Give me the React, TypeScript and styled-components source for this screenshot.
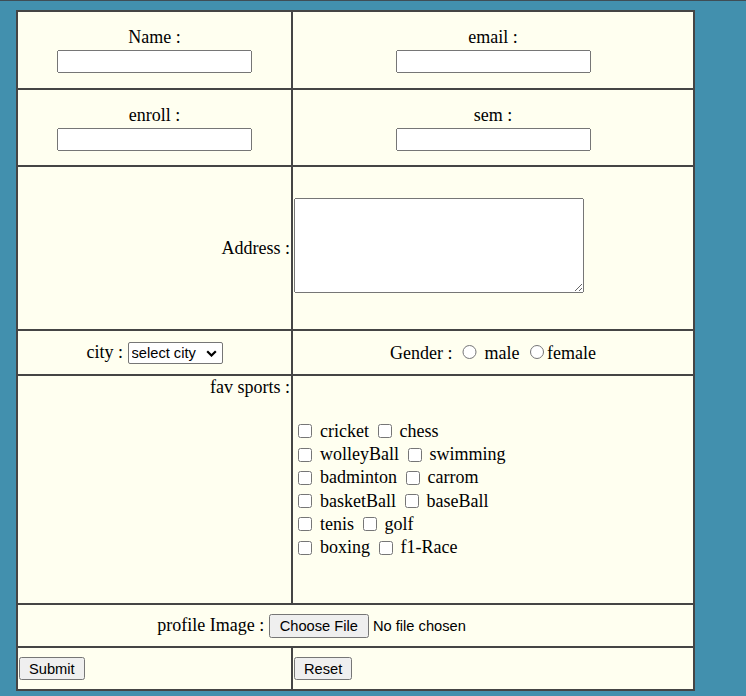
import styled, { createGlobalStyle } from 'styled-components';

const GlobalStyle = createGlobalStyle`
  html, body {
    margin: 0;
    background-color: #4290ae;
  }
  body {
    font-family: "Liberation Serif", "Times New Roman", serif;
    font-size: 18px;
    color: #000;
  }
  input, select, button, textarea {
    font-family: "Liberation Sans", Arial, sans-serif;
    font-size: 14.67px;
  }
`;

const Page = styled.div`
  min-height: 696px;
  box-sizing: border-box;
  border-top: 1px solid #3f4d55;
  padding: 9px 16px;
`;

const StudentForm = styled.form`
  display: grid;
  grid-template-columns: 275px 402px;
  width: max-content;
  border: 1px solid #454545;
  background-color: #fffff0;
`;

const Cell = styled.div<{ $h: number; $justify?: string; $align?: string; $span?: boolean }>`
  box-sizing: border-box;
  height: ${(p) => p.$h}px;
  border: 1px solid #454545;
  padding: 1px;
  display: flex;
  justify-content: ${(p) => p.$justify || 'center'};
  align-items: ${(p) => p.$align || 'center'};
  grid-column: ${(p) => (p.$span ? '1 / -1' : 'auto')};
`;

const Field = styled.label`
  display: flex;
  flex-direction: column;
  align-items: center;
  gap: 2px;
`;

const TextBox = styled.input`
  box-sizing: border-box;
  width: 195px;
  height: 23px;
  margin: 0;
`;

const AddressBox = styled.textarea`
  box-sizing: border-box;
  width: 290px;
  height: 95px;
  margin: 0 0 5px 0;
`;

const Inline = styled.span`
  white-space: nowrap;
`;

const SelectWrap = styled.span`
  position: relative;
  display: inline-block;
  vertical-align: baseline;
`;

const CitySelect = styled.select`
  appearance: none;
  box-sizing: border-box;
  width: 95px;
  height: 22px;
  margin: 0;
  padding: 0 0 0 3px;
  border: 1px solid #767676;
  border-radius: 2px;
  background-color: #fff;
  color: #000;
`;

const Chevron = styled.svg`
  position: absolute;
  right: 6px;
  top: 50%;
  margin-top: -3px;
  pointer-events: none;
`;

const Radio = styled.input`
  width: 14.3px;
  height: 14.3px;
  margin: 3.3px 3.3px 0 5.5px;
`;

const SportList = styled.div`
  display: flex;
  flex-direction: column;
  align-self: center;
`;

const SportLine = styled.div`
  height: 23.33px;
  display: flex;
  align-items: center;
`;

const SportOption = styled.label`
  display: inline-flex;
  align-items: center;

  & + & {
    margin-left: 4.4px;
  }
`;

const Check = styled.input`
  width: 14px;
  height: 14px;
  margin: 0 7.7px 0 4.4px;
`;

const FileInput = styled.input`
  width: 285px;
  margin: 0;

  &::file-selector-button {
    padding: 2px 9px;
    margin-right: 4px;
  }
`;

const ActionButton = styled.button`
  height: 23px;
  padding: 0 8px;
  margin: 0;
`;

const sports: [string, string][] = [
  ['cricket', 'chess'],
  ['wolleyBall', 'swimming'],
  ['badminton', 'carrom'],
  ['basketBall', 'baseBall'],
  ['tenis', 'golf'],
  ['boxing', 'f1-Race'],
];

const App: React.FC = () => {
  return (
    <Page>
      <GlobalStyle />
      <StudentForm onSubmit={(e) => e.preventDefault()}>
        <Cell $h={78}>
          <Field>
            Name :
            <TextBox type="text" name="name" />
          </Field>
        </Cell>
        <Cell $h={78}>
          <Field>
            email :
            <TextBox type="text" name="email" />
          </Field>
        </Cell>

        <Cell $h={77}>
          <Field>
            enroll :
            <TextBox type="text" name="enroll" />
          </Field>
        </Cell>
        <Cell $h={77}>
          <Field>
            sem :
            <TextBox type="text" name="sem" />
          </Field>
        </Cell>

        <Cell $h={164} $justify="flex-end">
          Address :
        </Cell>
        <Cell $h={164} $justify="flex-start">
          <AddressBox name="address" />
        </Cell>

        <Cell $h={45}>
          <Inline>
            city :{' '}
            <SelectWrap>
              <CitySelect name="city" defaultValue="">
                <option value="">select city</option>
                <option value="ahmedabad">ahmedabad</option>
                <option value="surat">surat</option>
                <option value="rajkot">rajkot</option>
              </CitySelect>
              <Chevron width="11" height="7" viewBox="0 0 11 7">
                <path d="M1.2 1.2 L5.5 5.5 L9.8 1.2" fill="none" stroke="#000" strokeWidth="2.2" />
              </Chevron>
            </SelectWrap>
          </Inline>
        </Cell>
        <Cell $h={45}>
          <Inline>
            Gender : <Radio type="radio" name="gender" value="male" /> male{' '}
            <Radio type="radio" name="gender" value="female" />female
          </Inline>
        </Cell>

        <Cell $h={229} $justify="flex-end" $align="flex-start">
          fav sports :
        </Cell>
        <Cell $h={229} $justify="flex-start">
          <SportList>
            {sports.map(([a, b]) => (
              <SportLine key={a}>
                <SportOption>
                  <Check type="checkbox" name="sports" value={a} />
                  {a}
                </SportOption>
                <SportOption>
                  <Check type="checkbox" name="sports" value={b} />
                  {b}
                </SportOption>
              </SportLine>
            ))}
          </SportList>
        </Cell>

        <Cell $h={43} $span>
          <Inline>
            profile Image : <FileInput type="file" name="profile" />
          </Inline>
        </Cell>

        <Cell $h={43} $justify="flex-start">
          <ActionButton type="submit">Submit</ActionButton>
        </Cell>
        <Cell $h={43} $justify="flex-start">
          <ActionButton type="reset">Reset</ActionButton>
        </Cell>
      </StudentForm>
    </Page>
  );
};

export default App;
